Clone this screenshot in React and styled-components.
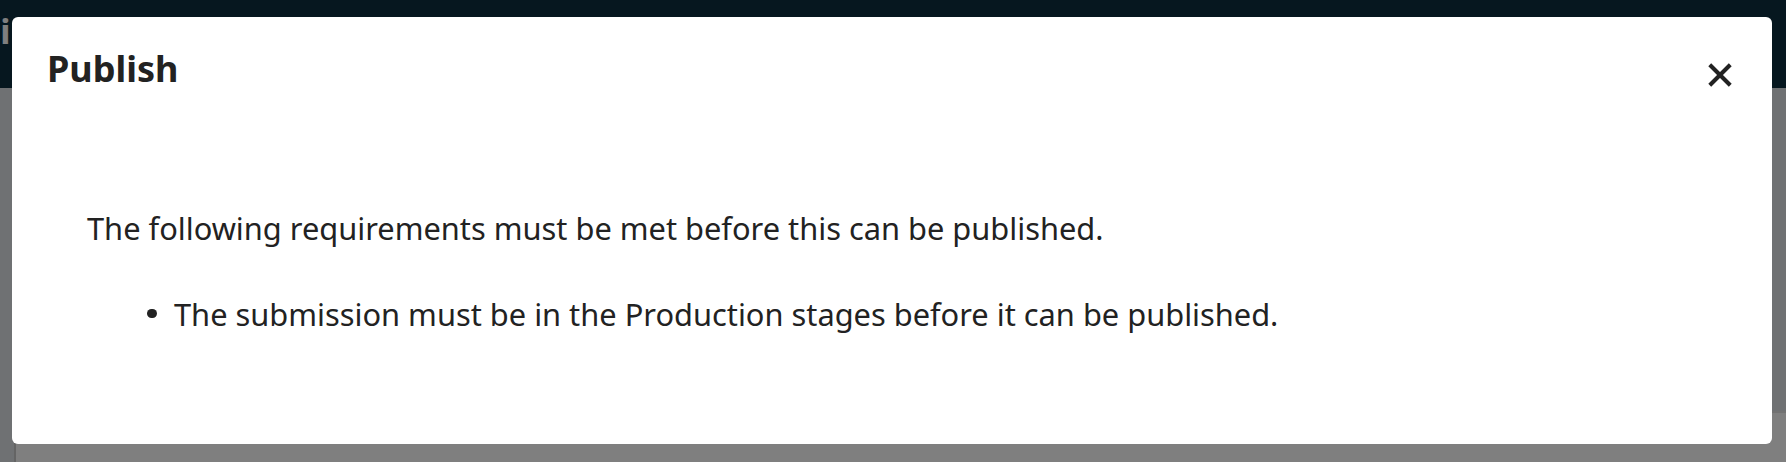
import React from "react";
import styled, { createGlobalStyle } from "styled-components";

const GlobalStyle = createGlobalStyle`
    html, body {
        margin: 0;
        padding: 0;
    }
    body {
        font-family: "Noto Sans", "Open Sans", sans-serif;
        background: #e0e3e6;
    }
`;

const App = () => {
    return (
        <Page>
            <GlobalStyle />
            <TopBar>
                <Brand>ii</Brand>
            </TopBar>
            <Workspace>
                <Panel />
            </Workspace>

            <Backdrop />

            <Modal role="dialog" aria-labelledby="publish-title">
                <ModalHeader>
                    <Title id="publish-title">Publish</Title>
                    <CloseButton aria-label="Close">
                        <svg width="24" height="24" viewBox="0 0 24 24">
                            <line x1="1.75" y1="1.75" x2="22.25" y2="22.25" />
                            <line x1="22.25" y1="1.75" x2="1.75" y2="22.25" />
                        </svg>
                    </CloseButton>
                </ModalHeader>

                <ModalBody>
                    <Message>
                        The following requirements must be met before this can
                        be published.
                    </Message>
                    <Requirements>
                        <Requirement>
                            <Dot />
                            The submission must be in the Production stages
                            before it can be published.
                        </Requirement>
                    </Requirements>
                </ModalBody>
            </Modal>
        </Page>
    );
};

export default App;

const Page = styled.div`
    position: relative;
    width: 1786px;
    height: 462px;
    overflow: hidden;
    display: flex;
    flex-direction: column;
    background: #dfe3e7;
`;

const TopBar = styled.header`
    height: 88px;
    flex-shrink: 0;
    background: #0c2f3f;
    display: flex;
    align-items: flex-start;
`;

const Brand = styled.span`
    margin: 8px 0 0 -12px;
    font-size: 34px;
    font-weight: 700;
    color: #ffffff;
    letter-spacing: 2px;
`;

const Workspace = styled.main`
    flex: 1;
    display: flex;
    padding: 323px 0 0 14px;
`;

const Panel = styled.section`
    flex: 1;
    background: #ffffff;
    border-left: 2px solid #c8c8c8;
    border-top: 2px solid #e4e4e4;
`;

const Backdrop = styled.div`
    position: absolute;
    inset: 0;
    background: rgba(0, 0, 0, 0.5);
`;

const Modal = styled.div`
    position: absolute;
    left: 12px;
    top: 17px;
    width: 1760px;
    height: 427px;
    box-sizing: border-box;
    background: #ffffff;
    border-radius: 6px;
    padding: 31.8px 32.5px 0 35px;
    display: flex;
    flex-direction: column;
    color: #222222;
`;

const ModalHeader = styled.div`
    display: flex;
    justify-content: space-between;
    align-items: flex-start;
`;

const Title = styled.h2`
    margin: 0;
    font-size: 36px;
    line-height: 40px;
    font-weight: 700;
`;

const CloseButton = styled.button`
    margin-top: 6.2px;
    width: 40px;
    height: 40px;
    padding: 0;
    border: none;
    background: transparent;
    display: flex;
    align-items: center;
    justify-content: center;
    cursor: pointer;
    & line {
        stroke: #222222;
        stroke-width: 4;
    }
`;

const ModalBody = styled.div`
    padding: 113px 0 0 40px;
    font-size: 30.8px;
    line-height: 40px;
`;

const Message = styled.p`
    margin: 0 0 45.7px 0;
`;

const Requirements = styled.ul`
    margin: 0;
    padding: 0 0 0 60px;
    list-style: none;
`;

const Requirement = styled.li`
    display: flex;
    align-items: center;
    gap: 17.5px;
`;

const Dot = styled.span`
    width: 9.5px;
    height: 9.5px;
    border-radius: 50%;
    background: #222222;
    flex-shrink: 0;
`;
